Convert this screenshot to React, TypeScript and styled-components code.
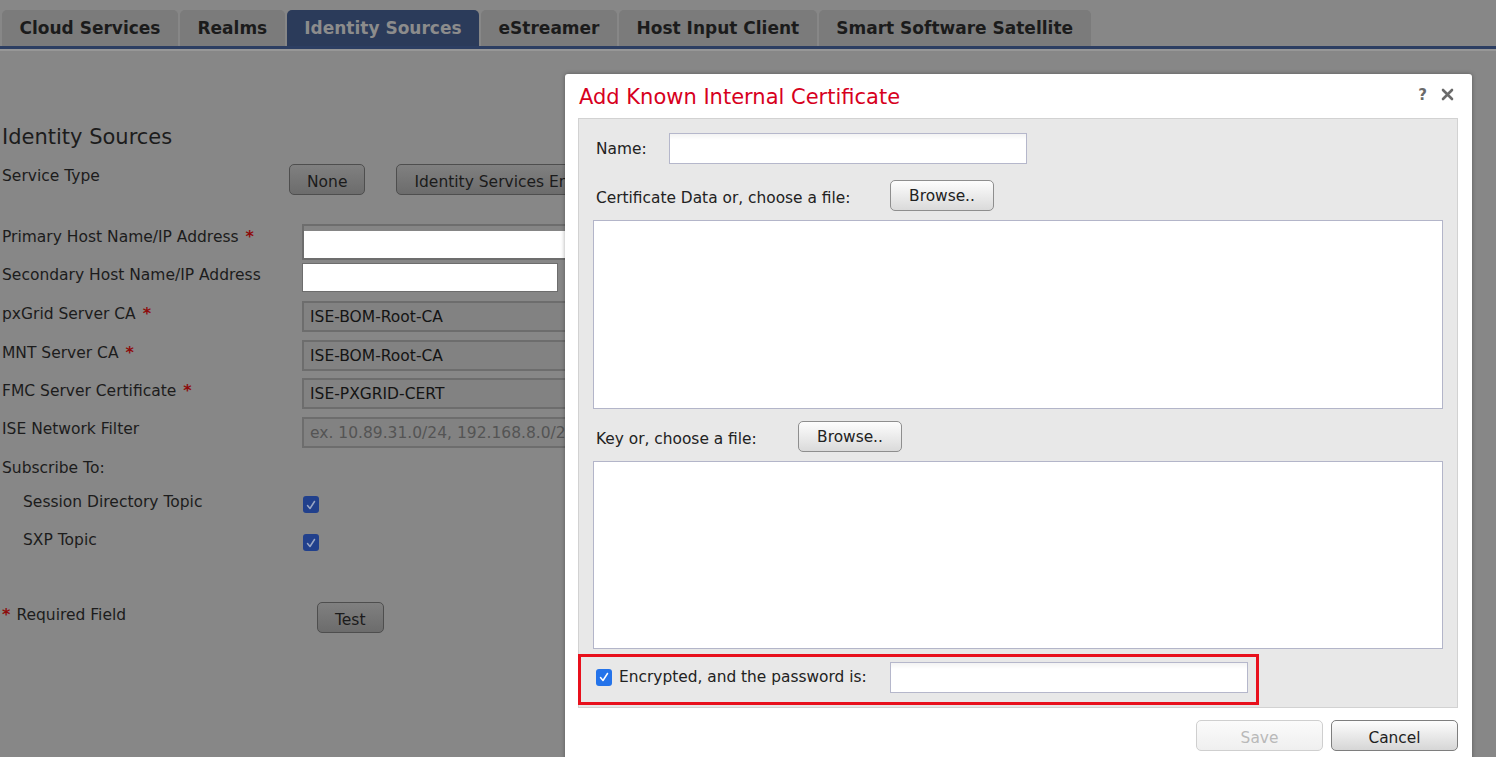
import React from 'react';
import styled, { createGlobalStyle } from 'styled-components';

const GlobalStyle = createGlobalStyle`
  html, body {
    margin: 0;
    padding: 0;
    overflow: hidden;
    background: #878787;
  }
  * {
    box-sizing: border-box;
  }
`;

const Page = styled.div`
  position: relative;
  height: 757px;
  width: 1496px;
  overflow: hidden;
  background: #878787;
  font-family: 'DejaVu Sans', Verdana, sans-serif;
  color: #1c1c1c;
`;

/* ---------- tabs ---------- */

const TabBar = styled.div`
  display: flex;
  gap: 2px;
  padding: 10px 0 0 2px;
  border-bottom: 3px solid #2c3e62;
  box-shadow: 0 2px 0 #979797;
`;

const Tab = styled.div<{ $active?: boolean }>`
  height: 36px;
  padding: 0 17.5px;
  display: flex;
  align-items: center;
  border-radius: 5px 5px 0 0;
  font-size: 17px;
  font-weight: bold;
  background: ${({ $active }) => ($active ? '#2b3b5a' : '#7b7b7b')};
  color: ${({ $active }) => ($active ? '#8c8c8c' : '#1b1b1b')};
  white-space: nowrap;
`;

/* ---------- background form ---------- */

const Form = styled.div`
  display: flex;
  flex-direction: column;
  padding-left: 2px;
`;

const Heading = styled.div`
  margin-top: 75px;
  font-size: 21px;
  line-height: 26px;
  color: #1c1c1c;
`;

const Row = styled.div<{ $mt: number; $h: number; $labelW?: number }>`
  display: flex;
  align-items: flex-start;
  margin-top: ${({ $mt }) => $mt}px;
  height: ${({ $h }) => $h}px;
  & > span:first-child {
    width: ${({ $labelW }) => $labelW ?? 300}px;
    flex-shrink: 0;
  }
`;

const Label = styled.span<{ $indent?: boolean }>`
  font-size: 15.5px;
  line-height: 25px;
  white-space: nowrap;
  padding-left: ${({ $indent }) => ($indent ? '21px' : '0')};
`;

const Req = styled.span`
  color: #8e0b0b;
  font-weight: bold;
  font-size: 16px;
  margin-left: 7px;
`;

const ReqLead = styled(Req)`
  margin: 0 6px 0 0;
`;

const DimButton = styled.button`
  height: 31px;
  padding: 5px 17px 0;
  border: 1px solid #4e4e4e;
  border-radius: 5px;
  background: linear-gradient(#808080, #6c6c6c);
  font-family: inherit;
  font-size: 15.5px;
  color: #1b1b1b;
  white-space: nowrap;
`;

const ButtonGroup = styled.div`
  display: flex;
  gap: 31px;
`;

const DimInput = styled.div<{ $w: number; $h: number; $inset?: boolean }>`
  width: ${({ $w }) => $w}px;
  height: ${({ $h }) => $h}px;
  background: #fff;
  border: 2px solid #6d6d6d;
  border-right: none;
  box-shadow: ${({ $inset }) => ($inset ? 'inset 0 5px 0 #858585' : 'none')};
`;

const SmallInput = styled(DimInput)`
  border: 1px solid #6d6d6d;
  border-right: 1px solid #6d6d6d;
`;

const DimSelect = styled.div<{ $placeholder?: boolean }>`
  width: 300px;
  height: 31px;
  padding: 0 6px;
  display: flex;
  align-items: center;
  background: #828282;
  border: 2px solid #6d6d6d;
  font-size: 15.5px;
  color: ${({ $placeholder }) => ($placeholder ? '#545454' : '#141414')};
  white-space: nowrap;
  overflow: hidden;
`;

const DimCheck = styled.div`
  width: 16px;
  height: 17px;
  margin-top: 6px;
  margin-left: 1px;
  border-radius: 3px;
  background: #21408c;
  display: flex;
  align-items: center;
  justify-content: center;
`;

/* ---------- dialog ---------- */

const Modal = styled.div`
  position: absolute;
  left: 565px;
  top: 74px;
  width: 907px;
  height: 720px;
  background: #fff;
  border-radius: 3px 3px 0 0;
  box-shadow: 0 0 4px rgba(0, 0, 0, 0.35);
  padding: 0 14px 0 13px;
  display: flex;
  flex-direction: column;
`;

const ModalHeader = styled.div`
  height: 44px;
  display: flex;
  align-items: center;
  justify-content: space-between;
  padding: 2px 4px 0 1px;
`;

const Title = styled.div`
  font-size: 21px;
  color: #d7001d;
`;

const HeaderTools = styled.div`
  display: flex;
  align-items: center;
  gap: 14px;
  color: #6a6a6a;
  font-size: 15px;
  font-weight: bold;
  margin-top: -5px;
`;

const Panel = styled.div`
  background: #e8e8e8;
  border: 1px solid #d2d2d2;
  padding: 14px 14px 2px;
  display: flex;
  flex-direction: column;
`;

const FieldRow = styled.div<{ $mt?: number }>`
  display: flex;
  align-items: center;
  margin-top: ${({ $mt }) => $mt ?? 0}px;
`;

const FieldLabel = styled.span<{ $w: number; $lower?: boolean }>`
  width: ${({ $w }) => $w}px;
  flex-shrink: 0;
  padding-left: 3px;
  padding-top: ${({ $lower }) => ($lower ? '5px' : '1px')};
  font-size: 15.4px;
  color: #222;
  white-space: nowrap;
`;

const TextField = styled.div<{ $w: number }>`
  width: ${({ $w }) => $w}px;
  height: 31px;
  border: 1px solid #b5b7cb;
  background: linear-gradient(#f3f3f3, #fff 6px);
`;

const BrowseButton = styled.button`
  width: 104px;
  height: 31px;
  border: 1px solid #8e8e8e;
  border-radius: 5px;
  background: linear-gradient(#fdfdfd, #dadada);
  font-family: inherit;
  font-size: 15.4px;
  color: #222;
  padding: 0;
`;

const TextArea = styled.div<{ $h: number; $mt: number }>`
  height: ${({ $h }) => $h}px;
  margin-top: ${({ $mt }) => $mt}px;
  background: #fff;
  border: 1px solid #b3b5c9;
`;

const Highlight = styled.div`
  margin: 5px 0 0 -15px;
  width: 681px;
  height: 51px;
  border: 3px solid #e8101c;
  display: flex;
  align-items: center;
  padding: 0 0 5px 15px;
`;

const BlueCheck = styled.div`
  width: 16px;
  height: 17px;
  border-radius: 3px;
  background: #2473ea;
  display: flex;
  align-items: center;
  justify-content: center;
  margin-right: 7px;
`;

const PwLabel = styled.span`
  width: 271px;
  flex-shrink: 0;
  font-size: 15.4px;
  color: #222;
  white-space: nowrap;
`;

const Footer = styled.div`
  display: flex;
  justify-content: flex-end;
  gap: 8px;
  margin-top: 12px;
`;

const DialogButton = styled.button<{ $disabled?: boolean }>`
  width: 127px;
  height: 31px;
  border-radius: 5px;
  border: 1px solid ${({ $disabled }) => ($disabled ? '#cfcfcf' : '#7e7e7e')};
  background: ${({ $disabled }) =>
    $disabled ? 'linear-gradient(#fbfbfb, #efefef)' : 'linear-gradient(#fdfdfd, #d6d6d6)'};
  color: ${({ $disabled }) => ($disabled ? '#b9b9b9' : '#1e1e1e')};
  font-family: inherit;
  font-size: 15.4px;
  padding: 4px 0 0;
`;

const Tick = ({ color }: { color: string }) => (
  <svg width="12" height="12" viewBox="0 0 12 12">
    <path d="M2.5 6.5 L5 9.5 L9.5 2.5" stroke={color} strokeWidth="1.5" fill="none" strokeLinecap="round" strokeLinejoin="round" />
  </svg>
);

const CloseIcon = () => (
  <svg width="13" height="13" viewBox="0 0 13 13">
    <path d="M2 2 L11 11 M11 2 L2 11" stroke="#6a6a6a" strokeWidth="2.6" strokeLinecap="round" />
  </svg>
);

const tabs = ['Cloud Services', 'Realms', 'Identity Sources', 'eStreamer', 'Host Input Client', 'Smart Software Satellite'];

const App: React.FC = () => {
  return (
    <Page>
      <GlobalStyle />
      <TabBar>
        {tabs.map((t) => (
          <Tab key={t} $active={t === 'Identity Sources'}>
            {t}
          </Tab>
        ))}
      </TabBar>

      <Form>
        <Heading>Identity Sources</Heading>

        <Row $mt={14} $h={31} $labelW={287}>
          <Label>Service Type</Label>
          <ButtonGroup>
            <DimButton>None</DimButton>
            <DimButton>Identity Services Engine</DimButton>
          </ButtonGroup>
        </Row>

        <Row $mt={29} $h={36}>
          <Label>
            Primary Host Name/IP Address<Req>*</Req>
          </Label>
          <DimInput $w={300} $h={36} $inset />
        </Row>

        <Row $mt={3} $h={29}>
          <Label>Secondary Host Name/IP Address</Label>
          <SmallInput $w={256} $h={29} />
        </Row>

        <Row $mt={9} $h={31}>
          <Label>
            pxGrid Server CA<Req>*</Req>
          </Label>
          <DimSelect>ISE-BOM-Root-CA</DimSelect>
        </Row>

        <Row $mt={8} $h={31}>
          <Label>
            MNT Server CA<Req>*</Req>
          </Label>
          <DimSelect>ISE-BOM-Root-CA</DimSelect>
        </Row>

        <Row $mt={7} $h={31}>
          <Label>
            FMC Server Certificate<Req>*</Req>
          </Label>
          <DimSelect>ISE-PXGRID-CERT</DimSelect>
        </Row>

        <Row $mt={8} $h={31}>
          <Label>ISE Network Filter</Label>
          <DimSelect $placeholder>ex. 10.89.31.0/24, 192.168.8.0/24</DimSelect>
        </Row>

        <Row $mt={8} $h={24}>
          <Label>Subscribe To:</Label>
        </Row>

        <Row $mt={10} $h={24}>
          <Label $indent>Session Directory Topic</Label>
          <DimCheck>
            <Tick color="#9aa6c4" />
          </DimCheck>
        </Row>

        <Row $mt={14} $h={24}>
          <Label $indent>SXP Topic</Label>
          <DimCheck>
            <Tick color="#9aa6c4" />
          </DimCheck>
        </Row>

        <Row $mt={50} $h={31} $labelW={315}>
          <Label>
            <ReqLead>*</ReqLead>Required Field
          </Label>
          <DimButton>Test</DimButton>
        </Row>
      </Form>

      <Modal>
        <ModalHeader>
          <Title>Add Known Internal Certificate</Title>
          <HeaderTools>
            <span>?</span>
            <CloseIcon />
          </HeaderTools>
        </ModalHeader>

        <Panel>
          <FieldRow>
            <FieldLabel $w={76}>Name:</FieldLabel>
            <TextField $w={358} />
          </FieldRow>

          <FieldRow $mt={16}>
            <FieldLabel $w={297} $lower>
              Certificate Data or, choose a file:
            </FieldLabel>
            <BrowseButton>Browse..</BrowseButton>
          </FieldRow>
          <TextArea $h={189} $mt={9} />

          <FieldRow $mt={12}>
            <FieldLabel $w={205} $lower>
              Key or, choose a file:
            </FieldLabel>
            <BrowseButton>Browse..</BrowseButton>
          </FieldRow>
          <TextArea $h={188} $mt={9} />

          <Highlight>
            <BlueCheck>
              <Tick color="#ffffff" />
            </BlueCheck>
            <PwLabel>Encrypted, and the password is:</PwLabel>
            <TextField $w={358} />
          </Highlight>
        </Panel>

        <Footer>
          <DialogButton $disabled>Save</DialogButton>
          <DialogButton>Cancel</DialogButton>
        </Footer>
      </Modal>
    </Page>
  );
};

export default App;
